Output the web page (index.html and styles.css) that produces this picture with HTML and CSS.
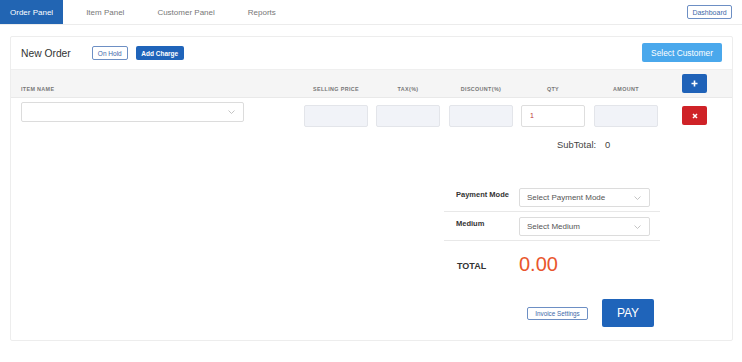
FILE: index.html
```html
<!DOCTYPE html>
<html lang="en">
<head>
  <title>Order Panel</title>
  <link rel="stylesheet" href="styles.css">
</head>
<body>

<!-- Top navigation -->
<nav class="topbar">
  <a class="tab active">Order Panel</a>
  <a class="tab">Item Panel</a>
  <a class="tab">Customer Panel</a>
  <a class="tab">Reports</a>
  <button class="btn-outline dashboard">Dashboard</button>
</nav>

<!-- Order card -->
<section class="card">
  <div class="card-header">
    <span class="card-title">New Order</span>
    <button class="btn-outline hold">On Hold</button>
    <button class="btn-solid charge">Add Charge</button>
    <button class="btn-light customer">Select Customer</button>
  </div>

  <div class="grid table-head">
    <div class="col-label left">ITEM NAME</div>
    <div class="col-label">SELLING PRICE</div>
    <div class="col-label">TAX(%)</div>
    <div class="col-label">DISCOUNT(%)</div>
    <div class="col-label">QTY</div>
    <div class="col-label">AMOUNT</div>
    <button class="icon-btn add">
      <svg width="7" height="7" viewBox="0 0 7 7"><path d="M3.5 0.5v6M0.5 3.5h6" stroke="#fff" stroke-width="1.6"/></svg>
    </button>
  </div>

  <div class="grid item-row">
    <div class="select item-select">
      <span></span>
      <svg class="chev" width="7" height="4" viewBox="0 0 7 4"><path d="M0.5 0.5l3 3l3-3" fill="none" stroke="#b5b5b5" stroke-width="0.8"/></svg>
    </div>
    <div class="field disabled"></div>
    <div class="field disabled"></div>
    <div class="field disabled"></div>
    <div class="field qty">1</div>
    <div class="field disabled"></div>
    <button class="icon-btn remove">
      <svg width="6" height="6" viewBox="0 0 6 6"><path d="M1 1l4 4M5 1l-4 4" stroke="#fff" stroke-width="1.5"/></svg>
    </button>
  </div>

  <div class="subtotal">
    <span>SubTotal:</span>
    <span>0</span>
  </div>

  <div class="payment">
    <div class="pay-row">
      <label class="pay-label">Payment Mode</label>
      <div class="select pay-select">
        <span>Select Payment Mode</span>
        <svg class="chev" width="7" height="4" viewBox="0 0 7 4"><path d="M0.5 0.5l3 3l3-3" fill="none" stroke="#b5b5b5" stroke-width="0.8"/></svg>
      </div>
    </div>
    <div class="pay-row">
      <label class="pay-label">Medium</label>
      <div class="select pay-select">
        <span>Select Medium</span>
        <svg class="chev" width="7" height="4" viewBox="0 0 7 4"><path d="M0.5 0.5l3 3l3-3" fill="none" stroke="#b5b5b5" stroke-width="0.8"/></svg>
      </div>
    </div>
    <div class="total-row">
      <span class="total-label">TOTAL</span>
      <span class="total-value">0.00</span>
    </div>
  </div>

  <div class="actions">
    <button class="btn-outline invoice">Invoice Settings</button>
    <button class="btn-solid pay">PAY</button>
  </div>
</section>

</body>
</html>
```

FILE: styles.css
```css
body {
  margin: 0;
  background: #fff;
  color: #333;
  font-family: "Liberation Sans", Arial, sans-serif;
}
button {
  font-family: inherit;
  cursor: pointer;
  padding: 0;
}

/* top navigation */
.topbar {
  display: flex;
  align-items: stretch;
  gap: 13px;
  height: 24px;
  border-bottom: 1px solid #ececec;
}
.tab {
  display: flex;
  align-items: center;
  padding: 0 10px;
  font-size: 8px;
  color: #777;
}
.tab.active {
  background: #2265b3;
  color: #fff;
}
.dashboard {
  align-self: center;
  margin-left: auto;
  margin-right: 10px;
  width: 45px;
  height: 14px;
  font-size: 7px;
}

/* buttons */
.btn-outline {
  background: #fff;
  border: 1px solid #6d8fc4;
  border-radius: 2px;
  color: #3d68a8;
}
.btn-solid {
  background: #1f64ba;
  border: none;
  border-radius: 2px;
  color: #fff;
}
.btn-light {
  background: #4aa8ec;
  border: none;
  border-radius: 2px;
  color: #fff;
}

/* card */
.card {
  margin: 11px 9px 0 10px;
  border: 1px solid #ededed;
  border-radius: 2px;
  padding-bottom: 13px;
}
.card-header {
  display: flex;
  align-items: center;
  height: 32px;
  padding: 0 10px;
  border-bottom: 1px solid #efefef;
}
.card-title {
  font-size: 10.3px;
  color: #333;
  margin-right: 21px;
}
.hold {
  width: 36px;
  height: 14px;
  font-size: 6.5px;
  margin-right: 8px;
}
.charge {
  width: 48px;
  height: 14px;
  font-size: 6.5px;
  font-weight: bold;
}
.customer {
  margin-left: auto;
  margin-top: -1px;
  width: 80px;
  height: 19px;
  font-size: 8.4px;
}

/* item table */
.grid {
  display: grid;
  grid-template-columns: 283px 72px 73px 72px 73px 88px 40px;
  align-items: start;
  padding: 0 10px;
}
.table-head {
  height: 23px;
  padding-top: 4px;
  background: #f5f5f5;
  border-bottom: 1px solid #e9e9e9;
}
.col-label {
  width: 64px;
  margin-top: 12px;
  font-size: 5.4px;
  font-weight: bold;
  letter-spacing: 0.35px;
  color: #777;
  text-align: center;
}
.col-label.left {
  width: auto;
  text-align: left;
}
.icon-btn {
  width: 25px;
  height: 19px;
  border: none;
  border-radius: 2px;
  display: flex;
  align-items: center;
  justify-content: center;
}
.add {
  background: #1f62b8;
}
.remove {
  background: #cf2227;
  margin-top: 4px;
}
.item-row {
  padding-top: 4px;
}
.select {
  display: flex;
  align-items: center;
  justify-content: space-between;
  box-sizing: border-box;
  border: 1px solid #dcdcdc;
  border-radius: 2px;
  background: #fff;
  font-size: 8px;
  color: #555;
}
.item-select {
  width: 223px;
  height: 20px;
  padding: 0 8px 0 10px;
}
.field {
  box-sizing: border-box;
  width: 64px;
  height: 22px;
  margin-top: 3px;
  border: 1px solid #e3e5ea;
  border-radius: 2px;
  font-size: 7px;
  line-height: 20px;
  padding-left: 8px;
}
.field.disabled {
  background: #f1f3f8;
}
.field.qty {
  background: #fff;
  border-color: #dedede;
  color: #b33;
}

.subtotal {
  display: flex;
  gap: 9px;
  margin: 12px 0 0 546px;
  font-size: 9.4px;
  line-height: 12px;
  color: #444;
}

/* payment block */
.payment {
  width: 216px;
  margin: 32px 0 0 433px;
}
.pay-row {
  display: flex;
  align-items: flex-start;
  padding: 5px 0 4px;
  border-bottom: 1px solid #e8e8e8;
}
.pay-label {
  width: 63px;
  padding: 2px 0 0 12px;
  font-size: 7.5px;
  font-weight: bold;
  color: #333;
}
.pay-select {
  width: 131px;
  height: 19px;
  padding: 0 8px 0 7px;
}
.total-row {
  display: flex;
  align-items: center;
  padding-top: 13px;
}
.total-label {
  width: 62px;
  padding: 3px 0 0 13px;
  font-size: 9px;
  font-weight: bold;
  color: #333;
}
.total-value {
  font-size: 20px;
  line-height: 20px;
  color: #e9562d;
}

.actions {
  display: flex;
  align-items: center;
  gap: 14px;
  margin: 25px 0 0 516px;
}
.invoice {
  width: 61px;
  height: 13px;
  font-size: 6.3px;
}
.pay {
  width: 52px;
  height: 28px;
  font-size: 12px;
}
```
